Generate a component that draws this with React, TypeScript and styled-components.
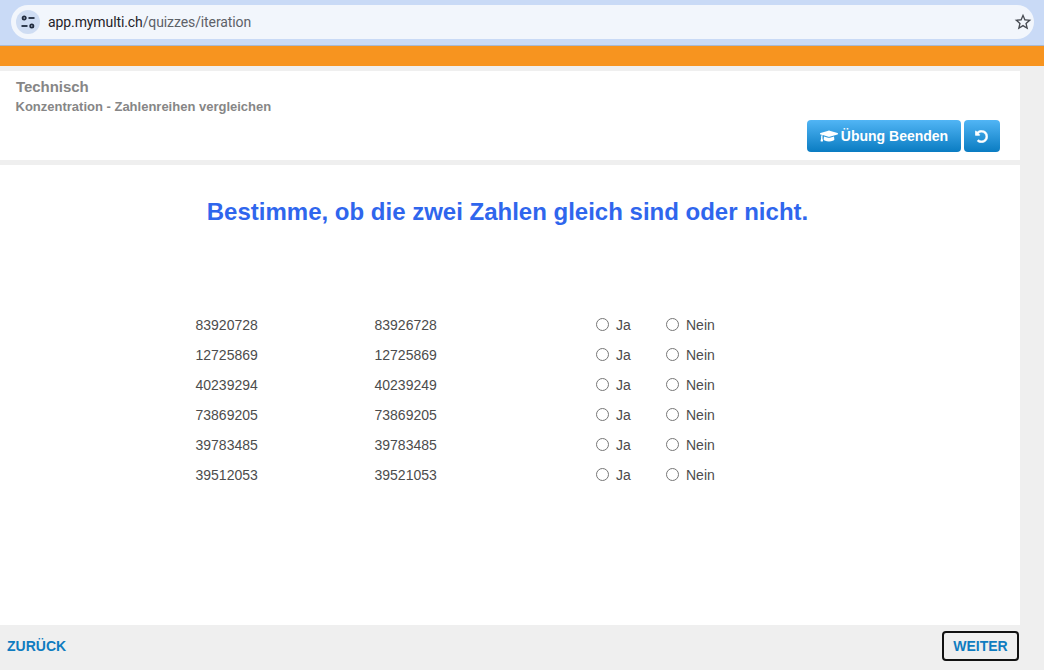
import React from 'react'
import styled, { createGlobalStyle } from 'styled-components'
import { FaGraduationCap, FaUndoAlt } from 'react-icons/fa'
import { MdStarBorder } from 'react-icons/md'

const rows = [
  ['83920728', '83926728'],
  ['12725869', '12725869'],
  ['40239294', '40239249'],
  ['73869205', '73869205'],
  ['39783485', '39783485'],
  ['39512053', '39521053']
]

const TuneIcon = () => (
  <svg width="16" height="16" viewBox="0 0 16 16" fill="none" stroke="#1f2a3d" strokeWidth="1.8">
    <circle cx="4.2" cy="4" r="1.6" />
    <path d="M8.5 4h6" />
    <path d="M1.5 12h6" />
    <circle cx="11.8" cy="12" r="1.6" />
  </svg>
)

export default function App() {
  return (
    <>
      <Global />
      <S.Chrome>
        <S.UrlBar>
          <S.TuneBadge>
            <TuneIcon />
          </S.TuneBadge>
          <S.Url>
            app.mymulti.ch<S.UrlPath>/quizzes/iteration</S.UrlPath>
          </S.Url>
          <S.Star>
            <MdStarBorder size={20} />
          </S.Star>
        </S.UrlBar>
      </S.Chrome>
      <S.OrangeBar />
      <S.Page>
        <S.Header>
          <S.Title>Technisch</S.Title>
          <S.Subtitle>Konzentration - Zahlenreihen vergleichen</S.Subtitle>
          <S.Actions>
            <S.ActionButton>
              <FaGraduationCap size={18} />
              Übung Beenden
            </S.ActionButton>
            <S.ActionButton square>
              <S.UndoGlyph>
                <FaUndoAlt size={13} />
              </S.UndoGlyph>
            </S.ActionButton>
          </S.Actions>
        </S.Header>
        <S.Quiz>
          <S.Question>Bestimme, ob die zwei Zahlen gleich sind oder nicht.</S.Question>
          <S.Rows>
            {rows.map(([a, b], i) => (
              <S.Row key={i}>
                <S.Cell>{a}</S.Cell>
                <S.Cell>{b}</S.Cell>
                <S.Option>
                  <S.Radio />
                  Ja
                </S.Option>
                <S.Option>
                  <S.Radio />
                  Nein
                </S.Option>
              </S.Row>
            ))}
          </S.Rows>
        </S.Quiz>
        <S.Footer>
          <S.BackLink>ZURÜCK</S.BackLink>
          <S.NextButton>WEITER</S.NextButton>
        </S.Footer>
      </S.Page>
    </>
  )
}

const Global = createGlobalStyle`
  html, body {
    margin: 0;
    padding: 0;
    height: 670px;
    overflow: hidden;
    background: #efefef;
    font-family: "Liberation Sans", Arial, sans-serif;
  }
`

const S = {
  Chrome: styled.div`
    height: 46px;
    box-sizing: border-box;
    padding: 5px 10px 0 11px;
    background: #c9daf6;
    border-bottom: 1px solid #a9b9d2;
  `,
  UrlBar: styled.div`
    height: 34px;
    display: flex;
    align-items: center;
    padding: 0 3px 0 5px;
    border-radius: 17px;
    background: #f2f6fc;
  `,
  TuneBadge: styled.div`
    width: 24px;
    height: 24px;
    border-radius: 50%;
    background: #cfddf3;
    display: flex;
    align-items: center;
    justify-content: center;
  `,
  Url: styled.div`
    margin-left: 8px;
    font-family: "Roboto", "Liberation Sans", sans-serif;
    font-size: 14px;
    color: #1f2329;
    letter-spacing: -.1px;
  `,
  UrlPath: styled.span`
    color: #5d6168;
  `,
  Star: styled.div`
    margin-left: auto;
    width: 16px;
    display: flex;
    justify-content: center;
    color: #474b52;
    svg {
      flex-shrink: 0;
    }
  `,
  OrangeBar: styled.div`
    height: 20px;
    background: #f7941f;
  `,
  Page: styled.div`
    padding-top: 5px;
    display: flex;
    flex-direction: column;
    height: 599px;
  `,
  Header: styled.div`
    width: 1020px;
    height: 89px;
    box-sizing: border-box;
    padding: 7px 20px 0 16px;
    background: #fff;
    display: flex;
    flex-direction: column;
  `,
  Title: styled.div`
    font-size: 15px;
    line-height: 17px;
    font-weight: 700;
    letter-spacing: -.05px;
    color: #868686;
  `,
  Subtitle: styled.div`
    margin-top: 4px;
    margin-left: -.5px;
    font-size: 13px;
    line-height: 15px;
    font-weight: 700;
    color: #868686;
  `,
  Actions: styled.div`
    margin-top: 6px;
    display: flex;
    justify-content: flex-end;
    gap: 3px;
  `,
  ActionButton: styled.button<{ square?: boolean }>`
    height: 32px;
    width: ${props => props.square ? '36px' : '154px'};
    padding: 0;
    border: 0;
    border-radius: 4px;
    background: linear-gradient(#51b5f5, #0a7cc2);
    color: #fff;
    font-family: inherit;
    font-size: 14px;
    font-weight: 700;
    display: flex;
    align-items: center;
    justify-content: center;
    gap: 3px;
  `,
  UndoGlyph: styled.span`
    display: flex;
    margin-left: -1px;
    svg {
      stroke: #fff;
      stroke-width: 16px;
    }
  `,
  Quiz: styled.div`
    width: 1020px;
    height: 460px;
    margin-top: 5px;
    background: #fff;
    display: flex;
    flex-direction: column;
  `,
  Question: styled.div`
    margin-top: 33px;
    text-align: center;
    font-size: 24px;
    line-height: 28px;
    font-weight: 700;
    color: #2f66ed;
    padding-right: 5px;
  `,
  Rows: styled.div`
    margin-top: 84px;
    padding-left: 196px;
    display: flex;
    flex-direction: column;
  `,
  Row: styled.div`
    height: 30px;
    display: grid;
    grid-template-columns: 179px 221px 70px auto;
    align-items: center;
    font-size: 14px;
    color: #4c4c4c;
  `,
  Cell: styled.div`
    line-height: 30px;
    margin-left: -.5px;
  `,
  Option: styled.label`
    display: flex;
    align-items: center;
    gap: 7px;
  `,
  Radio: styled.span`
    width: 13px;
    height: 13px;
    box-sizing: border-box;
    margin-top: -2px;
    border: 1px solid #767676;
    border-radius: 50%;
    background: #fff;
  `,
  Footer: styled.div`
    flex: 1;
    display: flex;
    align-items: center;
    justify-content: space-between;
    padding: 0 25px 3px 7px;
    background: #efefef;
  `,
  BackLink: styled.a`
    font-size: 14px;
    font-weight: 700;
    color: #0f7cc0;
  `,
  NextButton: styled.button`
    width: 77px;
    height: 30px;
    padding: 0;
    border: 2px solid #111;
    border-radius: 4px;
    background: transparent;
    font-family: inherit;
    font-size: 14px;
    font-weight: 700;
    color: #0f7cc0;
  `
}
